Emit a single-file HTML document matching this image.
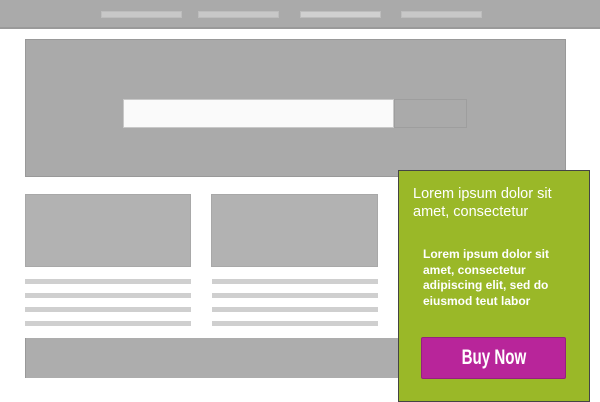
<!DOCTYPE html>
<html><head><style>
*{margin:0;padding:0;box-sizing:border-box}
body{width:600px;height:400px;background:#fff;position:relative;overflow:hidden;font-family:"Liberation Sans",sans-serif}
.a{position:absolute}
.g{background:#aaa}
.nav{background:#c8c8c8;border:1px solid #bdbdbd;height:7px;top:11px;width:81px}
.ln{background:#cfcfcf;height:5px;width:166px}
</style></head><body>
<div class="a g" style="left:0;top:0;width:600px;height:29px;border-bottom:2px solid #9a9a9a"></div>
<div class="a nav" style="left:101px"></div>
<div class="a nav" style="left:198px"></div>
<div class="a nav" style="left:300px;background:#d0d0d0"></div>
<div class="a nav" style="left:401px"></div>
<div class="a g" style="left:25px;top:39px;width:541px;height:138px;border:1px solid #999"></div>
<div class="a" style="left:123px;top:99px;width:271px;height:29px;background:#fafafa;border:1px solid #c8c8c8"></div>
<div class="a" style="left:394px;top:99px;width:73px;height:29px;border:1px solid #9e9e9e"></div>
<div class="a" style="left:25px;top:194px;width:166px;height:73px;background:#b2b2b2;border:1px solid #a8a8a8"></div>
<div class="a" style="left:211px;top:194px;width:167px;height:73px;background:#b2b2b2;border:1px solid #a8a8a8"></div>
<div class="a ln" style="left:25px;top:279px"></div>
<div class="a ln" style="left:25px;top:293px"></div>
<div class="a ln" style="left:25px;top:307px"></div>
<div class="a ln" style="left:25px;top:321px"></div>
<div class="a ln" style="left:212px;top:279px"></div>
<div class="a ln" style="left:212px;top:293px"></div>
<div class="a ln" style="left:212px;top:307px"></div>
<div class="a ln" style="left:212px;top:321px"></div>
<div class="a" style="left:25px;top:338px;width:541px;height:40px;background:#adadad;border-left:1px solid #999"></div>
<div class="a" style="left:398px;top:170px;width:192px;height:232px;background:#9ab828;border:1px solid #444"></div>
<div class="a" style="left:413px;top:185px;color:#fff;font-size:14.5px;line-height:18px">Lorem ipsum dolor sit<br>amet, consectetur</div>
<div class="a" style="left:423px;top:247px;color:#fff;font-size:12px;font-weight:bold;line-height:15.5px">Lorem ipsum dolor sit<br>amet, consectetur<br>adipiscing elit, sed do<br>eiusmod teut labor</div>
<div class="a" style="left:421px;top:337px;width:145px;height:42px;background:#b8259a;border:1px solid #962080;border-radius:2px;color:#fff;font-size:21px;font-weight:bold;line-height:40px;text-align:center"><span style="display:inline-block;transform:scaleX(0.72)">Buy Now</span></div>
</body></html>
